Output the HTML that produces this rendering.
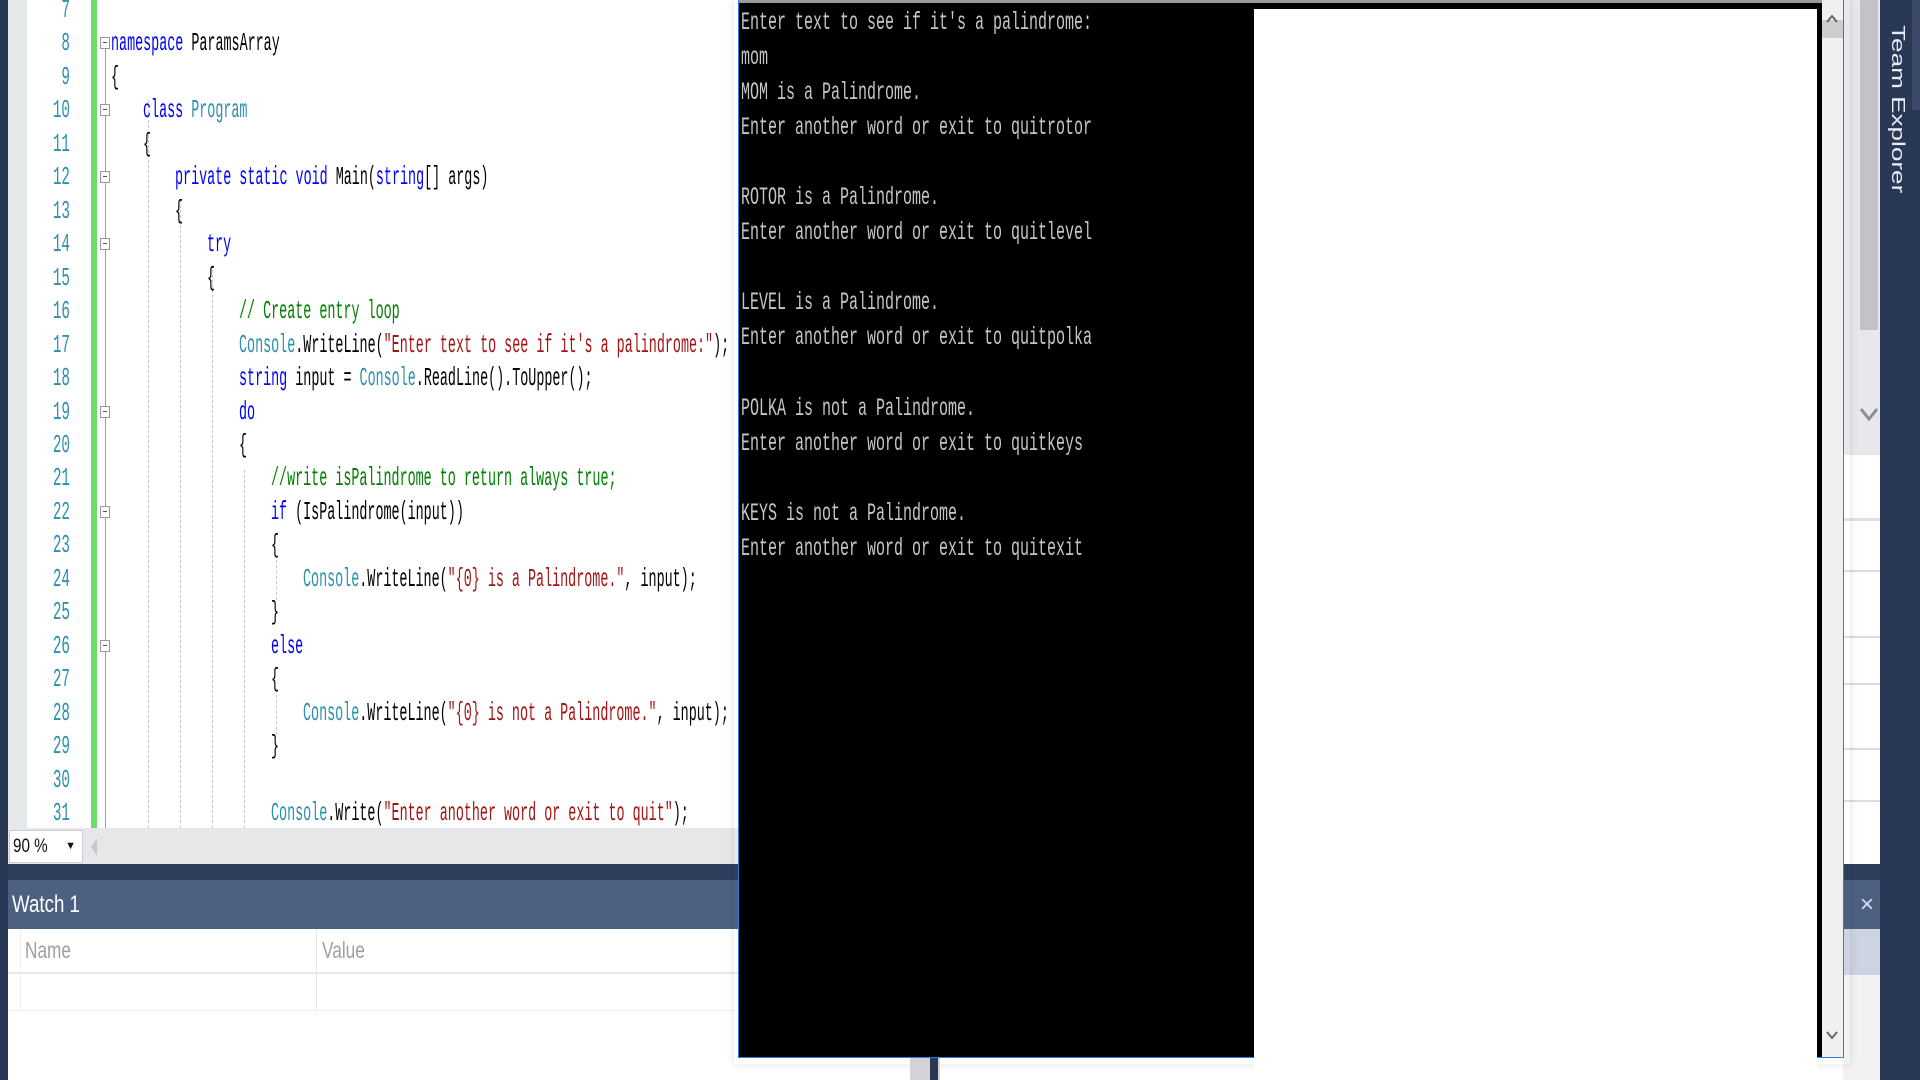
<!DOCTYPE html>
<html><head><meta charset="utf-8"><style>
*{margin:0;padding:0;box-sizing:border-box}
body{width:1920px;height:1080px;overflow:hidden;position:relative;background:#fff;font-family:"Liberation Sans",sans-serif}
.abs{position:absolute}
.code{position:absolute;left:0;top:0;width:740px;height:828px;overflow:hidden;background:#fff}
.ln{position:absolute;right:0;width:60px;text-align:right;color:#2b91af;font-family:"Liberation Mono",monospace;font-size:26px;line-height:34px;transform:scaleX(.55);transform-origin:right center}
.cl{position:absolute;white-space:pre;font-family:"Liberation Mono",monospace;font-size:26px;line-height:34px;color:#000;transform:scaleX(.515);transform-origin:left center}
.k{color:#0000ff}.t{color:#2b91af}.s{color:#a31515}.c{color:#008000}
.box{position:absolute;left:100px;width:10px;height:12px;border:1px solid #999;background:#fff}
.box:after{content:"";position:absolute;left:2px;top:4px;width:4px;height:1px;background:#555}
.guide{position:absolute;width:0;border-left:1px dashed #c8c8c8}
.con{position:absolute;white-space:pre;font-family:"Liberation Mono",monospace;font-size:25px;line-height:35px;color:#c6c6c6;transform:scaleX(.6);transform-origin:left center;left:741px}
</style></head><body>
<div class="code">
  <div class="abs" style="left:0;top:0;width:8px;height:828px;background:#293955"></div>
  <div class="abs" style="left:8px;top:0;width:19px;height:828px;background:#e6e7e8"></div>
  <div class="abs" style="left:91px;top:0;width:6px;height:828px;background:#6ddc6a"></div>
  <div class="abs" style="left:105px;top:40px;width:1px;height:788px;background:#a0a0a0"></div>
  <div class="guide" style="left:148px;top:100px;height:728px"></div>
  <div class="guide" style="left:180px;top:200px;height:628px"></div>
  <div class="guide" style="left:212px;top:265px;height:563px"></div>
  <div class="guide" style="left:244px;top:470px;height:358px"></div>
  <div class="guide" style="left:276px;top:560px;height:40px"></div>
  <div class="guide" style="left:276px;top:695px;height:40px"></div>
  <div id="lines"></div>
</div>
<!-- zoom bar -->
<div class="abs" style="left:0;top:828px;width:740px;height:36px;background:#e6e7e8"></div>
<div class="abs" style="left:0;top:828px;width:8px;height:252px;background:#293955"></div>
<div class="abs" style="left:9px;top:830px;width:74px;height:33px;background:#fff;border:1px solid #ccd;font-size:19px;line-height:31px;padding-left:3px;color:#111"><span style="display:inline-block;transform:scaleX(.8);transform-origin:left">90 %</span><span style="position:absolute;right:6px;top:0;font-size:11px">▼</span></div>
<div class="abs" style="left:91px;top:838px;width:0;height:0;border-top:9px solid transparent;border-bottom:9px solid transparent;border-right:6px solid #c8c9cc"></div>
<div class="abs" style="left:8px;top:864px;width:732px;height:16px;background:#2e3f5e"></div>
<div class="abs" style="left:8px;top:880px;width:732px;height:49px;background:#4d6082;color:#fff;font-size:24px;line-height:49px;padding-left:4px"><span style="display:inline-block;transform:scaleX(.78);transform-origin:left">Watch 1</span></div>
<div class="abs" style="left:8px;top:929px;width:732px;height:151px;background:#fff"></div>
<div class="abs" style="left:8px;top:972px;width:732px;height:2px;background:#e8e8ea"></div>
<div class="abs" style="left:8px;top:1010px;width:732px;height:1px;background:#f0f0f2"></div>
<div class="abs" style="left:20px;top:929px;width:1px;height:82px;background:#eee"></div>
<div class="abs" style="left:316px;top:929px;width:1px;height:82px;background:#e6e6e6"></div>
<div class="abs" style="left:25px;top:929px;height:43px;line-height:43px;font-size:23px;color:#a0a0a0;transform:scaleX(.75);transform-origin:left">Name</div>
<div class="abs" style="left:322px;top:929px;height:43px;line-height:43px;font-size:23px;color:#a0a0a0;transform:scaleX(.75);transform-origin:left">Value</div>
<!-- right side -->
<div class="abs" style="left:1843px;top:0;width:37px;height:1080px;background:#f2f2f2"></div>
<div class="abs" style="left:1843px;top:0;width:37px;height:455px;background:#e8e8ec"></div>
<div class="abs" style="left:1860px;top:0;width:18px;height:330px;background:#c2c3c9"></div>
<svg class="abs" style="left:1860px;top:405px" width="18" height="18" viewBox="0 0 18 18"><path d="M1 4 L9 14 L17 4" fill="none" stroke="#8a8e9a" stroke-width="3"/></svg>
<div class="abs" style="left:1843px;top:455px;width:37px;height:410px;background:#fff"></div>
<div class="abs" style="left:1843px;top:518px;width:37px;height:3px;background:#dde1ea"></div>
<div class="abs" style="left:1843px;top:570px;width:37px;height:2px;background:#dcdce0"></div>
<div class="abs" style="left:1843px;top:636px;width:37px;height:2px;background:#dcdce0"></div>
<div class="abs" style="left:1843px;top:683px;width:37px;height:2px;background:#dcdce0"></div>
<div class="abs" style="left:1843px;top:748px;width:37px;height:2px;background:#dcdce0"></div>
<div class="abs" style="left:1843px;top:800px;width:37px;height:2px;background:#dcdce0"></div>
<div class="abs" style="left:1843px;top:864px;width:37px;height:16px;background:#2e3f5e"></div>
<div class="abs" style="left:1843px;top:880px;width:37px;height:49px;background:#4d6082;color:#dde;font-size:24px;line-height:49px;text-align:right;padding-right:6px">×</div>
<div class="abs" style="left:1843px;top:929px;width:37px;height:46px;background:#cdd3e2"></div>
<div class="abs" style="left:1880px;top:0;width:40px;height:1080px;background:#293955"></div>
<div class="abs" style="left:1912px;top:0;width:8px;height:110px;background:#3a4a68"></div>
<div class="abs" style="left:1908px;top:25px;color:#e8ecf4;font-size:18px;white-space:nowrap;transform:rotate(90deg) scaleX(1.45);transform-origin:left top">Team Explorer</div>
<!-- console window -->
<div class="abs" style="left:734px;top:0;width:1116px;height:1064px;box-shadow:0 0 8px rgba(0,0,0,.12)"></div>
<div class="abs" style="left:738px;top:0;width:1106px;height:1058px;background:#000;border:1px solid #2b7fd4;border-top:none"></div>
<div class="abs" style="left:739px;top:0;width:1104px;height:3px;background:#9a9a9a"></div>
<div class="abs" style="left:1822px;top:0;width:21px;height:1057px;background:#f0f0f0"></div>
<div class="abs" style="left:1822px;top:20px;width:21px;height:18px;background:#cdcdcd"></div>
<svg class="abs" style="left:1826px;top:14px" width="12" height="10" viewBox="0 0 12 10"><path d="M1 8 L6 2 L11 8" fill="none" stroke="#666" stroke-width="2"/></svg>
<svg class="abs" style="left:1826px;top:1030px" width="12" height="10" viewBox="0 0 12 10"><path d="M1 2 L6 8 L11 2" fill="none" stroke="#666" stroke-width="2"/></svg>
<div class="abs" style="left:910px;top:1058px;width:30px;height:22px;background:#d4d4d8"></div>
<div class="abs" style="left:930px;top:1058px;width:8px;height:22px;background:#293955"></div>
<div id="con"></div>
<div class="abs" style="left:1254px;top:9px;width:563px;height:1067px;background:#fff"></div>
<script>
var L={7:[0,''],8:[0,'<span class="k">namespace</span> ParamsArray'],9:[0,'{'],10:[4,'<span class="k">class</span> <span class="t">Program</span>'],11:[4,'{'],12:[8,'<span class="k">private static void</span> Main(<span class="k">string</span>[] args)'],13:[8,'{'],14:[12,'<span class="k">try</span>'],15:[12,'{'],16:[16,'<span class="c">// Create entry loop</span>'],17:[16,'<span class="t">Console</span>.WriteLine(<span class="s">"Enter text to see if it\'s a palindrome:"</span>);'],18:[16,'<span class="k">string</span> input = <span class="t">Console</span>.ReadLine().ToUpper();'],19:[16,'<span class="k">do</span>'],20:[16,'{'],21:[20,'<span class="c">//write isPalindrome to return always true;</span>'],22:[20,'<span class="k">if</span> (IsPalindrome(input))'],23:[20,'{'],24:[24,'<span class="t">Console</span>.WriteLine(<span class="s">"{0} is a Palindrome."</span>, input);'],25:[20,'}'],26:[20,'<span class="k">else</span>'],27:[20,'{'],28:[24,'<span class="t">Console</span>.WriteLine(<span class="s">"{0} is not a Palindrome."</span>, input);'],29:[20,'}'],30:[0,''],31:[20,'<span class="t">Console</span>.Write(<span class="s">"Enter another word or exit to quit"</span>);']};
var boxes=[8,10,12,14,19,22,26],h='';
for(var n=7;n<=31;n++){var y=10+(n-7)*33.46;
h+='<div class="ln" style="left:10px;top:'+(y-17)+'px">'+n+'</div>';
h+='<div class="cl" style="left:'+(111+L[n][0]*8)+'px;top:'+(y-17)+'px">'+L[n][1]+'</div>';
if(boxes.indexOf(n)>=0)h+='<div class="box" style="top:'+(y-6)+'px"></div>';}
document.getElementById('lines').innerHTML=h;
var C=["Enter text to see if it's a palindrome:","mom","MOM is a Palindrome.","Enter another word or exit to quitrotor","","ROTOR is a Palindrome.","Enter another word or exit to quitlevel","","LEVEL is a Palindrome.","Enter another word or exit to quitpolka","","POLKA is not a Palindrome.","Enter another word or exit to quitkeys","","KEYS is not a Palindrome.","Enter another word or exit to quitexit"],c='';
for(var i=0;i<C.length;i++)c+='<div class="con" style="top:'+(22+i*35.1-17.5)+'px">'+C[i].replace(/</g,'&lt;')+'</div>';
document.getElementById('con').innerHTML=c;
</script>
</body></html>
